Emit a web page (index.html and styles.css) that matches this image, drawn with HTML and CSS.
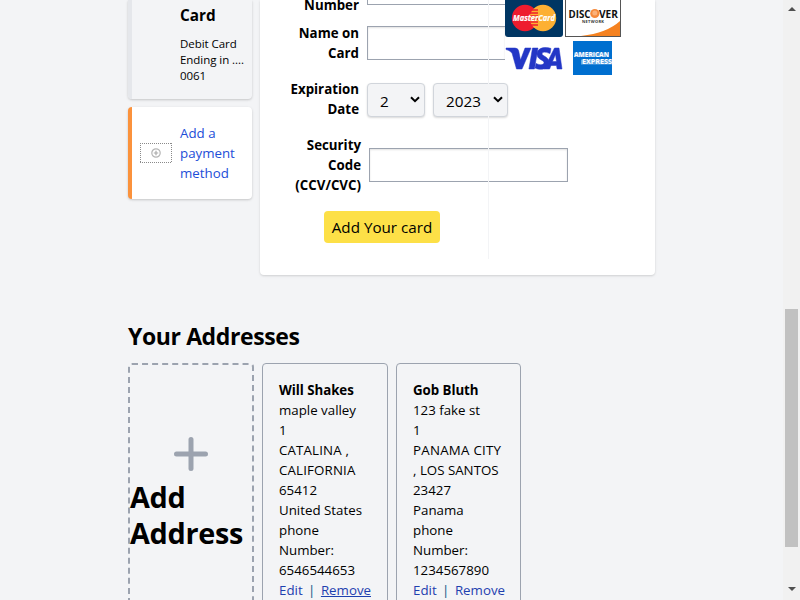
FILE: index.html
```
<!DOCTYPE html>
<html lang="en">
<head>
<meta charset="utf-8">
<title>Your Account</title>
<link rel="stylesheet" href="styles.css">
</head>
<body>
<div class="viewport">
  <main class="page">
    <section class="wallet">
      <aside class="methods">
        <div class="method saved">
          <h3>Card</h3>
          <p>Debit Card<br>Ending in ....<br>0061</p>
        </div>
        <a class="method add">
          <svg width="32" height="20" viewBox="0 0 32 20" fill="none">
            <path d="M0 .5h32M0 19.500h32M.5 0v20M31.500 0v20" stroke="#8a8a8a" stroke-dasharray="1 1"/>
            <circle cx="16" cy="10" r="4.200" stroke="#b5b5b5" stroke-width="1.200"/>
            <path d="M13.800 10h4.400M16 7.800v4.400" stroke="#aaa" stroke-width="1.200"/>
          </svg>
          <span>Add a<br>payment<br>method</span>
        </a>
      </aside>
      <div class="panel">
        <form class="form">
          <div class="row number"><label>Number</label><span class="input"></span></div>
          <div class="row name"><label>Name on<br>Card</label><span class="input"></span></div>
          <div class="row expiry"><label>Expiration<br>Date</label>
            <span class="select month">2<svg width="10" height="7" viewBox="0 0 10 7"><path d="M1 1.200l4 4 4-4" fill="none" stroke="#000" stroke-width="2"/></svg></span>
            <span class="select year">2023<svg width="10" height="7" viewBox="0 0 10 7"><path d="M1 1.200l4 4 4-4" fill="none" stroke="#000" stroke-width="2"/></svg></span>
          </div>
          <div class="row code"><label>Security<br>Code<br>(CCV/CVC)</label><span class="input"></span></div>
          <button type="button" class="submit"><span>Add Your card</span></button>
        </form>
        <div class="brands">
          <svg width="58" height="37" viewBox="0 0 58 37">
            <rect y="-6" width="58" height="43" rx="3" fill="#003663"/>
            <circle cx="20" cy="18" r="13.200" fill="#ee1c2e"/>
            <circle cx="38" cy="18" r="13.200" fill="#fdb033"/>
            <path d="M25 10h8M24 13h9M24 16h9M24 19h9M24 22h9M25 25h8" stroke="#ee1c2e" stroke-width="1.300"/>
            <text x="8" y="21" class="mc" textLength="42" lengthAdjust="spacingAndGlyphs">MasterCard</text>
          </svg>
          <svg width="56" height="37" viewBox="0 0 56 37">
            <rect x=".5" y="-3.500" width="55" height="40" fill="#fff" stroke="#555"/>
            <path d="M16 36Q42 33 55 21V36Z" fill="#f58220"/>
            <circle cx="29.800" cy="13.500" r="4.600" fill="#f58a3c"/><circle cx="29.800" cy="13" r="2.500" fill="#fbb27a"/>
            <text x="3.500" y="17.500" class="disc" textLength="22" lengthAdjust="spacingAndGlyphs">DISC</text>
            <text x="34" y="17.500" class="disc" textLength="19" lengthAdjust="spacingAndGlyphs">VER</text>
            <text x="17" y="22.800" class="net" textLength="22">NETWORK</text>
          </svg>
          <svg width="58" height="34" viewBox="0 0 58 34">
            <g fill="#2337c6" stroke="#2337c6" stroke-width=".5">
              <path d="M1 7h9q3 0 3.700 3L15.500 19 20 7h6l-9 21h-5.500L7 12Q4 9 1 8.500Z"/>
              <path d="M27.500 7h5.500l-3.600 21h-5.500Z"/>
              <path d="M46 7.500l-1 5Q37 9.500 37 13c0 2 7 2.700 7 8.200 0 7.500-9 8.300-14 5.800l1-4.600c4 2 8 1.600 8-.8 0-2.600-7-3-7-8.400 0-7 9-7.700 14-5.700Z"/>
              <path fill-rule="evenodd" d="M49.500 7H54L57 28h-4.900l-.6-3.500H46L44.600 28H39ZM50.500 13.500l-3 7h4Z"/>
            </g>
          </svg>
          <svg class="amex" width="39" height="34" viewBox="0 0 39 34">
            <rect width="39" height="34" fill="#006fcf"/>
            <rect x="1" y="11.500" width="35" height="4.500" fill="#cfe4f7" opacity=".4"/>
            <text x="1" y="16" class="ax" textLength="35" lengthAdjust="spacingAndGlyphs">AMERICAN</text>
            <rect x="8" y="18.500" width="31" height="5" fill="#cfe4f7" opacity=".5"/>
            <text x="9" y="23.300" class="ax" textLength="30" lengthAdjust="spacingAndGlyphs">EXPRESS</text>
          </svg>
        </div>
      </div>
    </section>
    <h2>Your Addresses</h2>
    <section class="addresses">
      <a class="new-address">
        <svg width="34" height="34" viewBox="0 0 34 34"><path d="M17 2.500v29M2.500 17h29" stroke="#9ca3af" stroke-width="5" stroke-linecap="round"/></svg>
        <strong>Add<br>Address</strong>
      </a>
      <article class="address">
        <b>Will Shakes</b><br>maple valley<br>1<br><span class="caps">CATALINA ,</span><br><span class="caps">CALIFORNIA</span><br>65412<br>United States<br>phone<br>Number:<br>6546544653
        <div class="actions"><a>Edit</a><i>|</i><a class="active">Remove</a></div>
      </article>
      <article class="address">
        <b>Gob Bluth</b><br>123 fake st<br>1<br><span class="caps city">PANAMA CITY</span><br>, LOS SANTOS<br>23427<br>Panama<br>phone<br>Number:<br>1234567890
        <div class="actions"><a>Edit</a><i>|</i><a>Remove</a></div>
      </article>
    </section>
  </main>
  <div class="scrollbar"><svg width="8" height="4" viewBox="0 0 8 4"><path d="M0 4L4 0l4 4Z" fill="#505050"/></svg><span class="thumb"></span><svg width="8" height="4" viewBox="0 0 8 4"><path d="M0 0h8L4 4Z" fill="#505050"/></svg></div>
</div>
</body>
</html>
```
FILE: styles.css
```
* { box-sizing: border-box; }
body { margin: 0; background: #f3f4f6; color: #000; font: 13.3px/20px "Open Sans", "Noto Sans", sans-serif; }
h2, h3, p { margin: 0; }
.viewport { display: flex; height: 600px; overflow: hidden; }
.page { flex: 1; padding-left: 128px; overflow: hidden; }
.wallet { display: flex; gap: 8px; height: 275px; }
.methods { width: 124px; display: flex; flex-direction: column; gap: 8px; }
.method { border-left: 4px solid #e5e7eb; border-radius: 4px; box-shadow: 0 1px 3px rgba(0,0,0,.12), 0 1px 2px rgba(0,0,0,.08); }
.saved { height: 99px; padding: 3px 0 0 48px; border-top-left-radius: 0; border-top-right-radius: 0; }
.saved h3 { font-size: 15.3px; line-height: 24px; font-weight: 700; }
.saved p { margin-top: 9px; font-size: 11.5px; line-height: 16px; white-space: nowrap; letter-spacing: -.05px; }
.add { height: 92px; display: flex; align-items: center; gap: 8px; padding-left: 8px; background: #fff; border-left-color: #fb923c; color: #1d4ed8; }
.panel { width: 395px; display: flex; background: #fff; border-radius: 0 0 4px 4px; box-shadow: 0 1px 3px rgba(0,0,0,.1), 0 1px 2px rgba(0,0,0,.06); }
.form { position: relative; width: 229px; height: 259px; flex: none; }
.form::after { content: ""; position: absolute; top: 0; right: 0; width: 1px; height: 100%; background: #f3f4f6; }
.row { display: flex; font-weight: 700; white-space: nowrap; }
.row label { width: 99px; flex: none; margin-right: 8px; text-align: right; }
.input { height: 34px; border: 1px solid #9ca3af; box-shadow: inset 0 1px 2px rgba(0,0,0,.12); }
.number { height: 23px; align-items: flex-start; }
.number label { margin-top: -5px; }
.number .input { width: 138px; flex: none; height: 5px; border-top: 0; border-right: 0; box-shadow: none; }
.name .input { width: 138px; flex: none; margin-top: 3px; border-right: 0; }
.expiry { height: 40px; margin-top: 16px; }
.select { display: flex; flex: none; align-items: center; justify-content: space-between; height: 34px; margin-top: 4px; padding: 1px 4px 0 12px; border: 1px solid #d1d5db; border-radius: 4px; background: #f3f4f6; box-shadow: 0 1px 2px rgba(0,0,0,.15); font-size: 15.300px; font-weight: 400; }
.select svg { margin-bottom: 3px; }
.month { width: 58px; margin-right: 8px; }
.year { width: 75px; }
.code { margin-top: 16px; height: 60px; }
.row.code label { width: 101px; }
.code .input { width: 199px; flex: none; margin-top: 13px; }
.submit { display: block; width: 116px; height: 32px; margin: 16px 0 0 64px; padding: 0; border: 0; border-radius: 4px; background: #fde047; color: #000; font: 15.200px/32px "Open Sans", sans-serif; white-space: nowrap; }
.brands { display: grid; grid-template-columns: 58px 56px; grid-template-rows: 37px 34px; gap: 4px 2px; margin-left: 16px; height: 75px; }
.amex { margin-left: 8px; }
.mc { font: italic 700 8.500px "Open Sans"; fill: #fff; stroke: #fff; stroke-width: .2px; }
.disc { font: 700 11px "Open Sans"; fill: #111; }
.net { font: 700 4px "Open Sans"; fill: #333; }
.ax { font: 700 6.300px "Open Sans"; fill: #fff; }
h2 { margin-top: 45px; height: 43px; font-size: 23px; line-height: 32px; font-weight: 700; letter-spacing: -.4px; }
.addresses { display: flex; gap: 8px; }
.new-address { display: flex; flex-direction: column; width: 126px; height: 288px; padding-top: 72px; border: 2px dashed #9ca3af; border-radius: 4px; }
.new-address svg { margin-left: 44px; }
.new-address strong { margin-top: 8px; font-size: 28.800px; line-height: 36px; letter-spacing: -.3px; }
.address { width: 126px; height: 288px; padding: 16px; border: 1px solid #9ca3af; border-radius: 4px; white-space: nowrap; }
.address + .address { width: 125px; padding-right: 15px; }
.address b { letter-spacing: -.05px; }
.caps { letter-spacing: .15px; }
.city { letter-spacing: .25px; }
.actions { display: flex; justify-content: space-between; color: #1e40af; }
.actions i { font-style: normal; color: #075985; }
.active { text-decoration: underline; }
.scrollbar { width: 17px; display: flex; flex-direction: column; align-items: center; padding: 7px 0; background: #f1f1f1; }
.thumb { width: 13px; height: 238px; margin: 298px 0 40px; flex: none; background: #c1c1c1; }
```
